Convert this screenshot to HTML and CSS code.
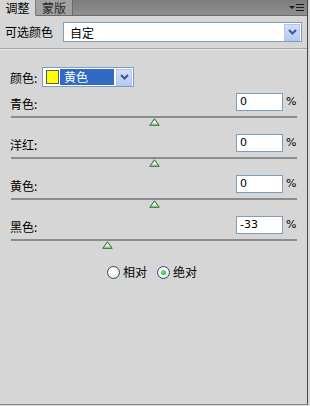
FILE: index.html
```html
<!DOCTYPE html>
<html lang="zh">
<head>
<meta charset="utf-8">
<link rel="stylesheet" href="styles.css">
</head>
<body>
<div class="panel">
  <div class="tabbar">
    <div class="tab active">调整</div>
    <div class="tab">蒙版</div>
    <div class="tabfill">
      <svg class="menu" width="15" height="9" viewBox="0 0 15 9">
        <path d="M0 3 H6 L3 6 Z" fill="#1a1a1a"/>
        <rect x="7" y="1" width="8" height="1" fill="#1a1a1a"/>
        <rect x="7" y="4" width="8" height="1" fill="#1a1a1a"/>
        <rect x="7" y="7" width="8" height="1" fill="#1a1a1a"/>
      </svg>
    </div>
  </div>

  <div class="preset">
    <span class="preset-label">可选颜色</span>
    <div class="combo wide">
      <span class="combo-text">自定</span>
      <span class="combo-btn"><svg width="9" height="6" viewBox="0 0 9 6"><path d="M1 1 L4.5 4.5 L8 1" fill="none" stroke="#3e5885" stroke-width="2"/></svg></span>
    </div>
  </div>
  <div class="sep"></div>

  <div class="color-row">
    <span class="lbl">颜色:</span>
    <div class="combo color">
      <span class="swatch"></span>
      <span class="sel">黄色</span>
      <span class="combo-btn"><svg width="9" height="6" viewBox="0 0 9 6"><path d="M1 1 L4.5 4.5 L8 1" fill="none" stroke="#3e5885" stroke-width="2"/></svg></span>
    </div>
  </div>

  <div class="group">
    <div class="row"><span class="lbl">青色:</span><span class="field">0</span><span class="pct">%</span></div>
    <div class="track"><svg class="thumb" style="left:50%" width="11" height="8" viewBox="0 0 11 8"><path d="M5.5 0.8 L10.2 7.3 H0.8 Z" fill="#b9dbb2" stroke="#2f6a2f" stroke-width="1"/><path d="M5.5 2.2 L7.6 5 H3.4 Z" fill="#f2fbef"/></svg></div>
  </div>
  <div class="group">
    <div class="row"><span class="lbl">洋红:</span><span class="field">0</span><span class="pct">%</span></div>
    <div class="track"><svg class="thumb" style="left:50%" width="11" height="8" viewBox="0 0 11 8"><path d="M5.5 0.8 L10.2 7.3 H0.8 Z" fill="#b9dbb2" stroke="#2f6a2f" stroke-width="1"/><path d="M5.5 2.2 L7.6 5 H3.4 Z" fill="#f2fbef"/></svg></div>
  </div>
  <div class="group">
    <div class="row"><span class="lbl">黄色:</span><span class="field">0</span><span class="pct">%</span></div>
    <div class="track"><svg class="thumb" style="left:50%" width="11" height="8" viewBox="0 0 11 8"><path d="M5.5 0.8 L10.2 7.3 H0.8 Z" fill="#b9dbb2" stroke="#2f6a2f" stroke-width="1"/><path d="M5.5 2.2 L7.6 5 H3.4 Z" fill="#f2fbef"/></svg></div>
  </div>
  <div class="group">
    <div class="row"><span class="lbl">黑色:</span><span class="field">-33</span><span class="pct">%</span></div>
    <div class="track"><svg class="thumb" style="left:33.5%" width="11" height="8" viewBox="0 0 11 8"><path d="M5.5 0.8 L10.2 7.3 H0.8 Z" fill="#b9dbb2" stroke="#2f6a2f" stroke-width="1"/><path d="M5.5 2.2 L7.6 5 H3.4 Z" fill="#f2fbef"/></svg></div>
  </div>

  <div class="radios">
    <label class="radio"><span class="dot"></span>相对</label>
    <label class="radio"><span class="dot on"></span>绝对</label>
  </div>
</div>
</body>
</html>
```
FILE: styles.css
```css
html, body {
  margin: 0;
  padding: 0;
  width: 310px;
  height: 406px;
  background: #d6d6d6;
  overflow: hidden;
}
body {
  font-family: "Noto Sans CJK SC", "Liberation Sans", sans-serif;
  font-size: 12px;
  color: #000;
}
.panel {
  width: 307px;
  height: 404px;
  border-right: 1px solid #4a4a4a;
  border-bottom: 1px solid #8a8a8a;
  background: #d6d6d6;
  display: flex;
  flex-direction: column;
}
.tabbar {
  height: 16px;
  display: flex;
  background: linear-gradient(#7c7c7c, #929292);
}
.tab {
  width: 36px;
  height: 15px;
  display: flex;
  align-items: center;
  justify-content: center;
  background: #a2a2a2;
  color: #2a2a2a;
  border-right: 1px solid #6a6a6a;
  border-bottom: 1px solid #6a6a6a;
  font-size: 12px;
  line-height: 14px;
}
.tab.active {
  width: 35px;
  background: #d6d6d6;
  color: #000;
  border-bottom: 1px solid #d6d6d6;
  border-right: 1px solid #7a7a7a;
}
.tabfill {
  flex: 1;
  display: flex;
  justify-content: flex-end;
  align-items: flex-start;
  border-bottom: 1px solid #6a6a6a;
  padding: 3px 3px 0 0;
}
.preset {
  height: 32px;
  display: flex;
  align-items: flex-start;
  padding: 6px 0 0 5px;
  box-sizing: border-box;
}
.preset-label {
  width: 58px;
  line-height: 20px;
  font-size: 12px;
}
.combo {
  display: flex;
  align-items: center;
  background: #fff;
  border: 1px solid #7f9db9;
  box-sizing: border-box;
}
.combo.wide {
  width: 239px;
  height: 20px;
  padding-right: 1px;
}
.combo-text {
  flex: 1;
  padding-left: 6px;
  font-size: 12px;
}
.combo-btn {
  width: 16px;
  height: 17px;
  display: flex;
  align-items: center;
  justify-content: center;
  background: linear-gradient(#d2defa, #b6c9f4);
  border: 1px solid #b3c5ef;
  box-sizing: border-box;
}
.sep {
  height: 1px;
  background: #a4a4a4;
  border-bottom: 1px solid #e8e8e8;
}
.color-row {
  margin-top: 17px;
  height: 20px;
  display: flex;
  align-items: center;
  padding-left: 10px;
}
.color-row .lbl {
  width: 32px;
}
.combo.color {
  width: 92px;
  height: 20px;
  padding: 0 1px 0 3px;
  gap: 1px;
}
.swatch {
  width: 13px;
  height: 14px;
  background: #ffff00;
  border: 1px solid #5a5a5a;
  box-sizing: border-box;
}
.sel {
  flex: 1;
  height: 16px;
  line-height: 16px;
  background: #316ac5;
  color: #fff;
  padding-left: 4px;
  margin-right: 1px;
}
.group {
  height: 41px;
  display: flex;
  flex-direction: column;
}
.color-row + .group {
  margin-top: 6px;
}
.row {
  height: 18px;
  display: flex;
  align-items: flex-end;
  padding: 0 10px 0 10px;
}
.row .lbl {
  flex: 1;
  line-height: 14px;
}
.field {
  width: 47px;
  height: 18px;
  box-sizing: border-box;
  border: 1px solid #7f9db9;
  background: #fff;
  font-family: "DejaVu Sans", sans-serif;
  font-size: 11px;
  line-height: 16px;
  padding-left: 3px;
}
.pct {
  width: 11px;
  margin-left: 3px;
  font-family: "DejaVu Sans", sans-serif;
  font-size: 11px;
  line-height: 16px;
  align-self: center;
}
.track {
  position: relative;
  margin: 5px 10px 0 11px;
  height: 2px;
  background: #8c8c8c;
}
.thumb {
  position: absolute;
  top: 2px;
  margin-left: -5px;
  display: block;
}
.radios {
  margin-top: 8px;
  display: flex;
  padding-left: 107px;
  gap: 10px;
}
.radio {
  display: flex;
  align-items: center;
  gap: 3px;
  line-height: 14px;
}
.dot {
  width: 13px;
  height: 13px;
  box-sizing: border-box;
  border-radius: 50%;
  border: 1px solid #1c5180;
  background: radial-gradient(circle at 40% 40%, #ffffff 30%, #d4d4cc 100%);
  display: flex;
  align-items: center;
  justify-content: center;
}
.dot.on::after {
  content: "";
  width: 5px;
  height: 5px;
  border-radius: 50%;
  background: radial-gradient(circle at 40% 40%, #7fe07f, #21a121);
}
```
